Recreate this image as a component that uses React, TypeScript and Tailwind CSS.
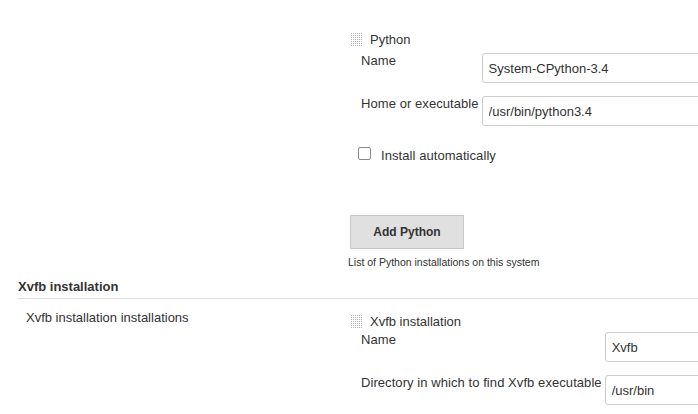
import React from "react";

function Grip() {
  const dots: React.ReactNode[] = [];
  for (let r = 0; r < 7; r++) {
    for (let c = 0; c < 6; c++) {
      dots.push(<rect key={`${r}-${c}`} x={c * 2} y={r * 2} width="1" height="1" />);
    }
  }
  return (
    <svg width="11" height="13" viewBox="0 0 11 13" className="fill-[#adadad] shrink-0 mt-[2px] ml-px">
      {dots}
    </svg>
  );
}

type Row = { label: string; value: string };

function Chunk({ title, rows, headGap }: { title: string; rows: Row[]; headGap: string }) {
  return (
    <div>
      <div className="flex items-start leading-[17px]">
        <Grip />
        <span className="ml-[8px]">{title}</span>
      </div>
      <div className={`grid grid-cols-[auto_1fr] gap-x-[3px] gap-y-[12px] items-start pl-[11px] ${headGap}`}>
        {rows.map((r) => (
          <React.Fragment key={r.label}>
            <div className="leading-[17px] whitespace-nowrap tracking-[0.07px]">{r.label}</div>
            <input
              readOnly
              defaultValue={r.value}
              className="mt-px h-[30px] w-full border border-[#cccccc] rounded-[3px] px-[6px] text-[13px] text-[#333] bg-white outline-none"
            />
          </React.Fragment>
        ))}
      </div>
    </div>
  );
}

export default function App() {
  return (
    <div className="w-[698px] h-[414px] overflow-hidden bg-white">
      <div className="w-[780px] text-[13px] text-[#333] font-['Liberation_Sans',Arial,sans-serif]">
        {/* Python installations */}
        <div className="flex pt-[31px]">
          <div className="w-[350px] shrink-0" />
          <div className="flex-1">
            <Chunk
              title="Python"
              headGap="mt-[4px]"
              rows={[
                { label: "Name", value: "System-CPython-3.4" },
                { label: "Home or executable", value: "/usr/bin/python3.4" },
              ]}
            />
            <div className="flex items-start mt-[21px] pl-[8px] leading-[17px]">
              <div className="w-[13px] h-[13px] border border-[#8a8a8a] rounded-[2px] bg-white shrink-0" />
              <span className="ml-[10px] tracking-[0.07px]">Install automatically</span>
            </div>
            <button className="mt-[51px] w-[114px] h-[34px] bg-[#e0e0e0] border border-[#c9c9c9] text-[12px] font-bold text-[#333] flex items-center justify-center">
              Add Python
            </button>
            <p className="mt-[7px] -ml-[2px] text-[10.5px] leading-[13px]">
              List of Python installations on this system
            </p>
          </div>
        </div>

        {/* Xvfb installation */}
        <div className="mt-[9px] ml-[18px] pb-[3px] border-b border-[#dddddd] font-bold leading-[17px]">
          Xvfb installation
        </div>
        <div className="flex">
          <div className="w-[350px] shrink-0 pl-[26px] pt-[10px] leading-[17px]">
            Xvfb installation installations
          </div>
          <div className="flex-1 pt-[14px]">
            <Chunk
              title="Xvfb installation"
              headGap="mt-[1px]"
              rows={[
                { label: "Name", value: "Xvfb" },
                { label: "Directory in which to find Xvfb executable", value: "/usr/bin" },
              ]}
            />
          </div>
        </div>
      </div>
    </div>
  );
}
